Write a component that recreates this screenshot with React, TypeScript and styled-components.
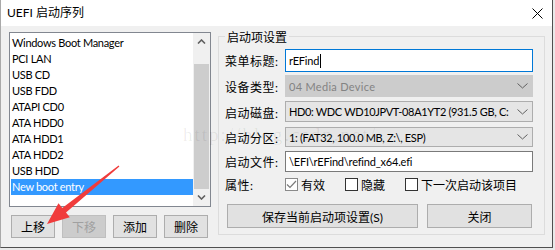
import React from 'react';
import styled, { createGlobalStyle } from 'styled-components';

const GlobalStyle = createGlobalStyle`
    html, body {
        margin: 0;
        padding: 0;
        background: #e9e9e9;
    }
    body {
        width: 555px;
        height: 250px;
        overflow: hidden;
    }
`;

const Window = styled.div`
    position: relative;
    width: 553px;
    height: 248px;
    box-sizing: border-box;
    border-left: 1px solid #a9a9a9;
    border-right: 1px solid #4f4f4f;
    border-bottom: 1px solid #4f4f4f;
    background: #f0f0f0;
    display: flex;
    flex-direction: column;
    font-family: Lato, 'Noto Sans CJK SC', sans-serif;
    font-size: 12px;
    color: #000;
`;

const TitleBar = styled.div`
    height: 26px;
    flex: none;
    background: #fff;
    display: flex;
    align-items: center;
    justify-content: space-between;
    padding: 0 9px 0 6px;
`;

const Title = styled.span`
    font-size: 12px;
    line-height: 16px;
`;

const Body = styled.div`
    flex: 1;
    display: flex;
    gap: 7px;
    padding: 0 6px 0 8px;
`;

const LeftColumn = styled.div`
    width: 202px;
    padding-top: 6px;
    display: flex;
    flex-direction: column;
    gap: 8px;
`;

const ListBox = styled.div`
    height: 175px;
    box-sizing: border-box;
    border: 1px solid #828790;
    background: #fff;
    display: flex;
`;

const Items = styled.ul`
    flex: 1;
    margin: 0;
    padding: 2px 0 0 1px;
    list-style: none;
`;

const Item = styled.li<{ selected?: boolean }>`
    height: 16px;
    line-height: 16px;
    padding-left: 1px;
    font-size: 11px;
    letter-spacing: -0.3px;
    white-space: nowrap;
    background: ${(p) => (p.selected ? '#3399ff' : 'transparent')};
    color: ${(p) => (p.selected ? '#fff' : '#000')};
`;

const ScrollBar = styled.div`
    width: 17px;
    background: #f0f0f0;
    display: flex;
    flex-direction: column;
`;

const ScrollArrow = styled.div`
    height: 17px;
    display: flex;
    align-items: center;
    justify-content: center;
`;

const Track = styled.div`
    flex: 1;
    padding: 14px 1px 0;
    display: flex;
`;

const Thumb = styled.div`
    flex: 1;
    background: #cdcdcd;
`;

const ButtonRow = styled.div`
    display: flex;
    gap: 7px;
    padding-left: 2px;
`;

const Button = styled.button<{ width?: number }>`
    ${(p) => (p.width ? `width: ${p.width}px;` : 'flex: 1;')}
    height: ${(p) => (p.width && p.width < 60 ? 23 : 24)}px;
    box-sizing: border-box;
    margin: 0;
    padding: 0;
    border: 1px solid #adadad;
    background: #e1e1e1;
    font-family: Lato, 'Noto Sans CJK SC', sans-serif;
    font-size: 12px;
    color: #000;

    &:disabled {
        border-color: #bfbfbf;
        background: #cccccc;
        color: #a0a0a0;
    }
`;

const GroupBox = styled.fieldset`
    width: 327px;
    box-sizing: border-box;
    min-width: 0;
    margin: 0;
    padding: 3px 11px 6px 6px;
    border: 1px solid #dcdcdc;
    align-self: flex-start;
`;

const Legend = styled.legend`
    padding: 4px 2px 0;
    line-height: 16px;
`;

const FormGrid = styled.div`
    display: grid;
    grid-template-columns: 60px minmax(0, 1fr);
    grid-template-rows: 23px 23px 23px 21px 21px 18px;
    row-gap: 3px;
`;

const Label = styled.div`
    align-self: center;
    white-space: nowrap;
    letter-spacing: 0.5px;
`;

const Field = styled.div<{ h: number }>`
    height: ${(p) => p.h}px;
    min-width: 0;
    align-self: start;
    display: flex;
`;

const TextBox = styled.div<{ focused?: boolean }>`
    flex: 1;
    min-width: 0;
    box-sizing: border-box;
    border: 1px solid ${(p) => (p.focused ? '#0078d7' : '#7a7a7a')};
    background: #fff;
    display: flex;
    align-items: center;
    padding-left: 3px;
    font-size: 11px;
    letter-spacing: -0.2px;
    white-space: nowrap;
`;

const Caret = styled.span`
    display: inline-block;
    width: 1px;
    height: 14px;
    background: #000;
    margin-left: 1px;
`;

const Combo = styled.div<{ disabled?: boolean }>`
    flex: 1;
    min-width: 0;
    box-sizing: border-box;
    border: 1px solid ${(p) => (p.disabled ? '#cccccc' : '#adadad')};
    background: ${(p) => (p.disabled ? '#cccccc' : '#e5e5e5')};
    color: ${(p) => (p.disabled ? '#838383' : '#000')};
    display: flex;
    align-items: center;
    padding-left: 3px;
`;

const ComboText = styled.span<{ wide?: boolean }>`
    flex: 1;
    min-width: 0;
    overflow: hidden;
    white-space: nowrap;
    font-size: 11px;
    letter-spacing: ${(p) => (p.wide ? '0.3px' : '-0.35px')};
`;

const ComboArrow = styled.span`
    width: 20px;
    flex: none;
    display: flex;
    align-items: center;
    justify-content: center;
`;

const CheckRow = styled.div`
    display: flex;
    align-items: center;
    gap: 20px;
`;

const CheckItem = styled.label`
    display: flex;
    align-items: center;
    gap: 3px;
    white-space: nowrap;
`;

const CheckBox = styled.span<{ dim?: boolean }>`
    width: 13px;
    height: 13px;
    box-sizing: border-box;
    border: 1px solid ${(p) => (p.dim ? '#8a8a8a' : '#333333')};
    background: #fff;
    display: flex;
    align-items: center;
    justify-content: center;
`;

const ActionRow = styled.div`
    display: flex;
    gap: 9px;
    margin-top: 11px;
    padding: 0 1px 0 2px;
`;

const Watermark = styled.div`
    position: absolute;
    left: 182px;
    top: 124px;
    font-family: 'Liberation Serif', serif;
    font-size: 19px;
    letter-spacing: 2px;
    color: rgba(0, 0, 0, 0.07);
    pointer-events: none;
    white-space: nowrap;
`;

const Overlay = styled.svg`
    position: absolute;
    left: 0;
    top: 0;
    pointer-events: none;
`;

const Chevron = ({ up }: { up?: boolean }) => (
    <svg width="9" height="5" viewBox="0 0 9 5">
        <path
            d={up ? 'M1 4.5 L4.5 1 L8 4.5' : 'M1 0.5 L4.5 4 L8 0.5'}
            fill="none"
            stroke="#606060"
            strokeWidth="1.6"
        />
    </svg>
);

const ComboChevron = () => (
    <svg width="11" height="6" viewBox="0 0 11 6">
        <path d="M0.5 0.5 L5.5 5 L10.5 0.5" fill="none" stroke="#606060" strokeWidth="1" />
    </svg>
);

const entries = [
    'Windows Boot Manager',
    'PCI LAN',
    'USB CD',
    'USB FDD',
    'ATAPI CD0',
    'ATA HDD0',
    'ATA HDD1',
    'ATA HDD2',
    'USB HDD',
    'New boot entry',
];

// arrow geometry: tail -> tip
const tail = [118, 166];
const tip = [46, 224];
const arrowPoints = (() => {
    const dx = tip[0] - tail[0];
    const dy = tip[1] - tail[1];
    const len = Math.hypot(dx, dy);
    const ux = dx / len;
    const uy = dy / len;
    const nx = -uy;
    const ny = ux;
    const bx = tip[0] - 22 * ux;
    const by = tip[1] - 22 * uy;
    const p = (x: number, y: number) => `${x.toFixed(1)},${y.toFixed(1)}`;
    return [
        p(tail[0] + 0.6 * nx, tail[1] + 0.6 * ny),
        p(bx + 3 * nx, by + 3 * ny),
        p(bx + 9 * nx, by + 9 * ny),
        p(tip[0], tip[1]),
        p(bx - 9 * nx, by - 9 * ny),
        p(bx - 3 * nx, by - 3 * ny),
        p(tail[0] - 0.6 * nx, tail[1] - 0.6 * ny),
    ].join(' ');
})();

const App = (): JSX.Element => {
    return (
        <>
            <GlobalStyle />
            <Window>
                <TitleBar>
                    <Title>UEFI 启动序列</Title>
                    <svg width="11" height="11" viewBox="0 0 11 11">
                        <path d="M0.5 0.5 L10.5 10.5 M10.5 0.5 L0.5 10.5" stroke="#000" strokeWidth="1" />
                    </svg>
                </TitleBar>
                <Body>
                    <LeftColumn>
                        <ListBox>
                            <Items>
                                {entries.map((e, i) => (
                                    <Item key={e} selected={i === entries.length - 1}>
                                        {e}
                                    </Item>
                                ))}
                            </Items>
                            <ScrollBar>
                                <ScrollArrow>
                                    <Chevron up />
                                </ScrollArrow>
                                <Track>
                                    <Thumb />
                                </Track>
                                <ScrollArrow>
                                    <Chevron />
                                </ScrollArrow>
                            </ScrollBar>
                        </ListBox>
                        <ButtonRow>
                            <Button width={44}>上移</Button>
                            <Button width={44} disabled>
                                下移
                            </Button>
                            <Button width={44}>添加</Button>
                            <Button width={44}>删除</Button>
                        </ButtonRow>
                    </LeftColumn>
                    <GroupBox>
                        <Legend>启动项设置</Legend>
                        <FormGrid>
                            <Label>菜单标题:</Label>
                            <Field h={23}>
                                <TextBox focused>
                                    rEFind
                                    <Caret />
                                </TextBox>
                            </Field>
                            <Label>设备类型:</Label>
                            <Field h={22}>
                                <Combo disabled>
                                    <ComboText wide>04 Media Device</ComboText>
                                    <ComboArrow>
                                        <ComboChevron />
                                    </ComboArrow>
                                </Combo>
                            </Field>
                            <Label>启动磁盘:</Label>
                            <Field h={21}>
                                <Combo>
                                    <ComboText>HD0: WDC WD10JPVT-08A1YT2 (931.5 GB, C:</ComboText>
                                    <ComboArrow>
                                        <ComboChevron />
                                    </ComboArrow>
                                </Combo>
                            </Field>
                            <Label>启动分区:</Label>
                            <Field h={20}>
                                <Combo>
                                    <ComboText>1: (FAT32, 100.0 MB, Z:\, ESP)</ComboText>
                                    <ComboArrow>
                                        <ComboChevron />
                                    </ComboArrow>
                                </Combo>
                            </Field>
                            <Label>启动文件:</Label>
                            <Field h={21}>
                                <TextBox>\EFI\rEFind\refind_x64.efi</TextBox>
                            </Field>
                            <Label>属性:</Label>
                            <CheckRow>
                                <CheckItem>
                                    <CheckBox dim>
                                        <svg width="11" height="9" viewBox="0 0 11 9">
                                            <path d="M1 4.5 L4 7.5 L10 1" fill="none" stroke="#7a7a7a" strokeWidth="1.2" />
                                        </svg>
                                    </CheckBox>
                                    有效
                                </CheckItem>
                                <CheckItem>
                                    <CheckBox />
                                    隐藏
                                </CheckItem>
                                <CheckItem>
                                    <CheckBox />
                                    下一次启动该项目
                                </CheckItem>
                            </CheckRow>
                        </FormGrid>
                        <ActionRow>
                            <Button width={191}>保存当前启动项设置(S)</Button>
                            <Button>关闭</Button>
                        </ActionRow>
                    </GroupBox>
                </Body>
                <Watermark>http://blog.csdn.net/</Watermark>
                <Overlay width="553" height="248" viewBox="0 0 553 248">
                    <polygon points={arrowPoints} fill="#f03c3c" />
                </Overlay>
            </Window>
        </>
    );
};

export default App;
